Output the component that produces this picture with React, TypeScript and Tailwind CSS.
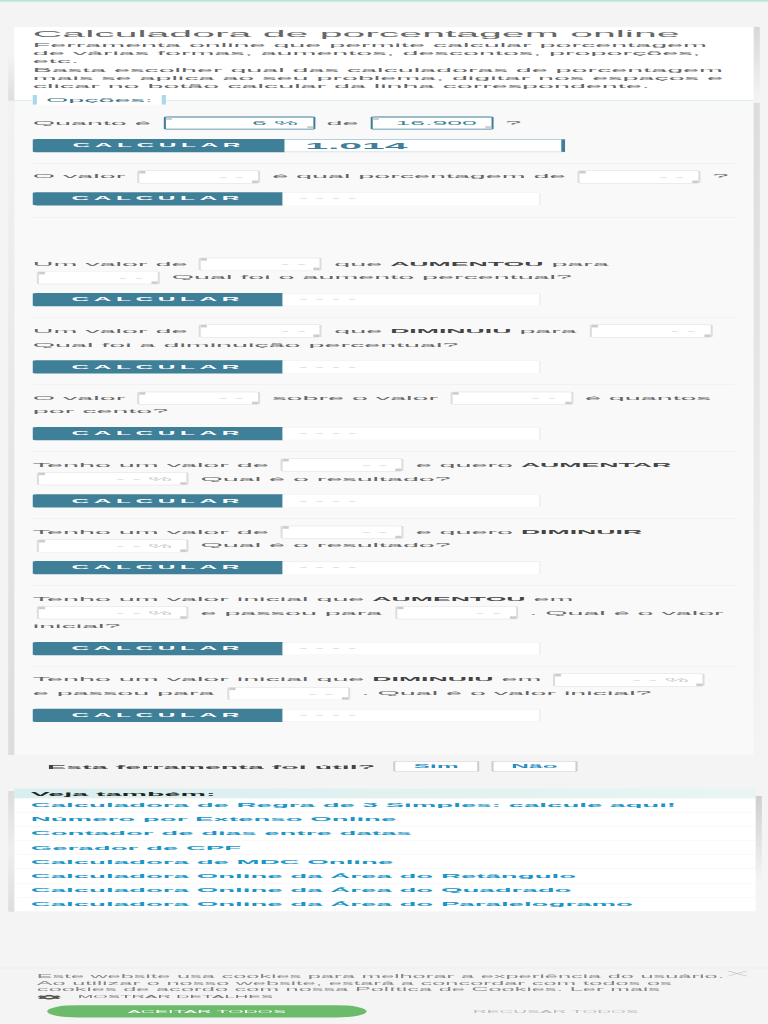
import { ReactNode } from "react";
import { FaCog } from "react-icons/fa";

// A pagina original tem 375px de largura e foi esticada para 768x1024
function Field({ value, filled, wide }: { value?: string; filled?: boolean; wide?: boolean }) {
  return (
    <span
      className={`relative mx-[2px] inline-block h-[31px] rounded-[2px] border bg-white pr-[7px] text-right align-middle text-[13px] leading-[29px] ${wide ? "w-[74px]" : "w-[60px]"} ${filled ? "border-y-2 border-[#3f7f98] text-[#3f7f98]" : "border-[#dddddd] text-[#cccccc]"}`}
    >
      {value ?? (wide ? "- - %" : "- -")}
      <span className="absolute left-0 top-0 h-[6px] w-[3px] bg-[#cccccc]" />
      <span className="absolute bottom-0 right-0 h-[6px] w-[3px] bg-[#cccccc]" />
    </span>
  );
}

function CalcRow({ result }: { result?: string }) {
  return (
    <div className="flex h-[32px]">
      <div className={`flex items-center justify-center rounded-l-[2px] bg-[#3f7f98] text-[12px] font-bold tracking-[2.2px] text-white ${result ? "w-[123px]" : "w-[122px]"}`}>
        CALCULAR
      </div>
      {result ? (
        <div className="flex w-[137px] items-center rounded-r-[2px] border-y-2 border-r-2 border-[#8ab5c4] border-r-[#3f7f98] bg-white pl-[10px] text-[20px] font-bold text-[#3f7f98]">
          {result}
        </div>
      ) : (
        <div className="flex w-[126px] items-center rounded-r-[2px] border-y-2 border-r border-[#eeeeee] bg-white pl-[8px] text-[13px] text-[#cccccc]">
          - - - -
        </div>
      )}
    </div>
  );
}

function Strong({ children }: { children: ReactNode }) {
  return <b className="text-[13px] text-[#444444]">{children}</b>;
}

function Question({ children, last }: { children: ReactNode; last?: boolean }) {
  return (
    <div className={`pb-[26.5px] pt-[15px] ${last ? "" : "border-b border-[#e8e8e8]"}`}>
      <div className="mb-[21px] leading-[33px]">{children}</div>
      <CalcRow />
    </div>
  );
}

const links = [
  "Calculadora de Regra de 3 Simples: calcule aqui!",
  "Número por Extenso Online",
  "Contador de dias entre datas",
  "Gerador de CPF",
  "Calculadora de MDC Online",
  "Calculadora Online da Área do Retângulo",
  "Calculadora Online da Área do Quadrado",
  "Calculadora Online da Área do Paralelogramo",
];

export default function App() {
  return (
    <div className="h-[1024px] w-[768px] overflow-hidden bg-[#f4f4f4] blur-[0.35px]">
      <div className="flex h-[2467px] w-[375px] origin-top-left scale-x-[2.048] scale-y-[0.415] flex-col font-['Liberation_Sans',Arial,sans-serif] text-[14px] leading-[20px] text-[#666666]">
        <div className="h-[4px] bg-[#b9e2d8]" />

        {/* Card principal */}
        <div className="relative ml-[7px] mt-[61px] w-[361px] bg-[#f9f9f9]">
          <div className="absolute -left-[3px] top-[67px] h-[111px] w-[3px] bg-gradient-to-b from-[#f4f4f4] to-[#dedede]" />
          <div className="absolute -left-[3px] bottom-0 top-[178px] w-[3px] bg-gradient-to-b from-[#f2f2f2] to-[#dcdcdc]" />
          <div className="absolute -right-[3px] top-0 h-[178px] w-[3px] bg-gradient-to-b from-[#d8d8d8] to-[#f4f4f4]" />
          <div className="absolute -right-[3px] bottom-0 top-[183px] w-[3px] bg-gradient-to-b from-[#dcdcdc] to-[#f4f4f4]" />
          <div className="h-[178px] border-b border-[#b5dde6] bg-white px-[9px]">
            <h1 className="pb-[3px] pt-[4px] text-[20px] leading-[26px]">Calculadora de porcentagem online</h1>
            <p>
              Ferramenta online que permite calcular porcentagem de várias formas, aumentos, descontos, proporções, etc.
              <br />
              Basta escolher qual das calculadoras de porcentagem mais se aplica ao seu problema, digitar nos espaços e clicar no botão calcular da linha correspondente.
            </p>
          </div>
          <div className="relative px-[9px] pb-[52px]">
            <div className="absolute -top-[14px] left-[9px] h-[23px] w-[65px] border-x-2 border-[#a8d8ea] bg-white text-center text-[14px] leading-[22px] text-[#3a7488]">
              Opções:
            </div>
            <div className="border-b border-[#e8e8e8] pb-[26px] pt-[36px]">
              <div className="mb-[23px] leading-[33px]">
                Quanto é <Field value="6 %" filled wide /> de <Field value="16.900" filled /> ?
              </div>
              <CalcRow result="1.014" />
            </div>
            <div className="border-b border-[#e8e8e8] pb-[28px] pt-[15px]">
              <div className="mb-[21px] leading-[33px]">
                O valor <Field /> é qual porcentagem de <Field /> ?
              </div>
              <CalcRow />
            </div>
            <div className="h-[80px]" />
            <Question>
              Um valor de <Field /> que <Strong>AUMENTOU</Strong> para <Field /> Qual foi o aumento percentual?
            </Question>
            <Question>
              Um valor de <Field /> que <Strong>DIMINUIU</Strong> para <Field /> Qual foi a diminuição percentual?
            </Question>
            <Question>
              O valor <Field /> sobre o valor <Field /> é quantos por cento?
            </Question>
            <Question>
              Tenho um valor de <Field /> e quero <Strong>AUMENTAR</Strong> <Field wide /> Qual é o resultado?
            </Question>
            <Question>
              Tenho um valor de <Field /> e quero <Strong>DIMINUIR</Strong> <Field wide /> Qual é o resultado?
            </Question>
            <Question>
              Tenho um valor inicial que <Strong>AUMENTOU</Strong> em <Field wide /> e passou para <Field /> . Qual é o valor inicial?
            </Question>
            <Question last>
              Tenho um valor inicial que <Strong>DIMINUIU</Strong> em <Field wide />
              <br />e passou para <Field /> . Qual é o valor inicial?
            </Question>
          </div>
        </div>

        {/* Feedback */}
        <div className="ml-[23px] mt-[14px] flex h-[28px] items-center">
          <span className="w-[169px] font-bold text-[#444444]">Esta ferramenta foi útil?</span>
          <span className="flex h-[26px] w-[42px] items-center justify-center rounded-[2px] border border-[#cccccc] bg-white text-[12px] font-bold text-[#2a8cc0]">
            Sim
          </span>
          <span className="ml-[6px] flex h-[26px] w-[42px] items-center justify-center rounded-[2px] border border-[#cccccc] bg-white text-[12px] font-bold text-[#2a8cc0]">
            Não
          </span>
        </div>

        {/* Veja tambem */}
        <div className="relative ml-[7px] mt-[39px] w-[362px]">
          <div className="absolute -left-[3px] bottom-0 top-[6px] w-[3px] bg-gradient-to-b from-[#dddddd] via-[#eeeeee] to-[#dddddd]" />
          <div className="absolute -right-[3px] top-[18px] h-[205px] w-[3px] bg-gradient-to-b from-[#cfcfcf] to-[#f4f4f4]" />
          <div className="h-[24px] bg-gradient-to-r from-[#d9eeee] to-[#e8f5f3] pl-[8px] font-bold leading-[24px] text-[#222222]">
            Veja também:
          </div>
          {links.map((link) => (
            <div key={link} className="h-[34.2px] border-b border-[#eeeeee] bg-white pl-[8px] text-[13.5px] font-bold leading-[33px] text-[#1a96c8]">
              {link}
            </div>
          ))}
        </div>

        {/* Aviso de cookies */}
        <div className="mt-auto h-[135px] border-t border-[#e4e4e4] px-[18px] pt-[12px] text-[11.5px] leading-[16px] text-[#888888]">
          <div className="relative">
            Este website usa cookies para melhorar a experiência do usuário. Ao utilizar o nosso website, estará a concordar com todos os cookies de acordo com nossa Política de Cookies. Ler mais
            <svg viewBox="0 0 10 14" className="absolute -right-[8px] -top-[6px] h-[14px] w-[10px]" fill="none" stroke="#bbbbbb" strokeWidth="0.8">
              <path d="M0 0L10 14M10 0L0 14" />
            </svg>
          </div>
          <div className="mt-[1px] flex h-[18px] items-center text-[9.1px] text-[#777777]">
            <FaCog className="mr-[8px] h-[12px] w-[12px] shrink-0 text-[#555555]" />
            MOSTRAR DETALHES
          </div>
          <div className="mt-[10px] flex h-[30px] items-center">
            <span className="ml-[5px] flex h-[30px] w-[156px] items-center justify-center rounded-full bg-[#6cbb6a] text-[9.6px] text-white">
              ACEITAR TODOS
            </span>
            <span className="ml-[52px] text-[9.3px] text-[#bbbbbb]">RECUSAR TODOS</span>
          </div>
        </div>
      </div>
    </div>
  );
}
